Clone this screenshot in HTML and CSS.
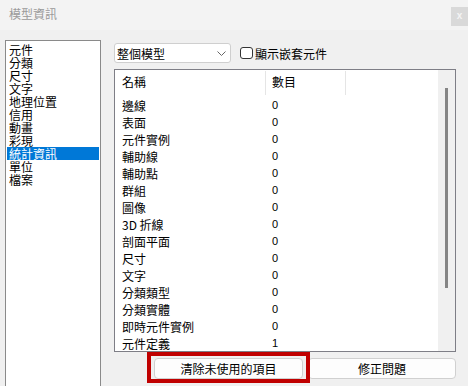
FILE: index.html
```html
<!DOCTYPE html>
<html>
<head>
<meta charset="utf-8">
<link rel="stylesheet" href="styles.css">
</head>
<body>
<div class="window">
  <div class="titlebar">
    <span class="title">模型資訊</span>
    <span class="close">x</span>
  </div>
  <div class="main">
    <ul class="nav">
      <li>元件</li>
      <li>分類</li>
      <li>尺寸</li>
      <li>文字</li>
      <li>地理位置</li>
      <li>信用</li>
      <li>動畫</li>
      <li>彩現</li>
      <li class="sel">統計資訊</li>
      <li>單位</li>
      <li>檔案</li>
    </ul>
    <div class="content">
      <div class="toolbar">
        <div class="select">
          <span>整個模型</span>
          <svg class="chev" width="9" height="5" viewBox="0 0 9 5"><path d="M0.5 0.5 L4.5 4.5 L8.5 0.5" fill="none" stroke="#666" stroke-width="1"/></svg>
        </div>
        <label class="check"><span class="box"></span><span>顯示嵌套元件</span></label>
      </div>
      <div class="table">
        <div class="grid">
          <div class="head">
            <div class="c1">名稱</div>
            <div class="c2">數目</div>
            <div class="c3"></div>
          </div>
          <div class="row"><div class="c1">邊線</div><div class="c2 n">0</div></div>
          <div class="row"><div class="c1">表面</div><div class="c2 n">0</div></div>
          <div class="row"><div class="c1">元件實例</div><div class="c2 n">0</div></div>
          <div class="row"><div class="c1">輔助線</div><div class="c2 n">0</div></div>
          <div class="row"><div class="c1">輔助點</div><div class="c2 n">0</div></div>
          <div class="row"><div class="c1">群組</div><div class="c2 n">0</div></div>
          <div class="row"><div class="c1">圖像</div><div class="c2 n">0</div></div>
          <div class="row"><div class="c1">3D 折線</div><div class="c2 n">0</div></div>
          <div class="row"><div class="c1">剖面平面</div><div class="c2 n">0</div></div>
          <div class="row"><div class="c1">尺寸</div><div class="c2 n">0</div></div>
          <div class="row"><div class="c1">文字</div><div class="c2 n">0</div></div>
          <div class="row"><div class="c1">分類類型</div><div class="c2 n">0</div></div>
          <div class="row"><div class="c1">分類實體</div><div class="c2 n">0</div></div>
          <div class="row"><div class="c1">即時元件實例</div><div class="c2 n">0</div></div>
          <div class="row"><div class="c1">元件定義</div><div class="c2 n">1</div></div>
        </div>
        <div class="scroll"><div class="thumb"></div></div>
      </div>
      <div class="buttons">
        <button class="btn b1">清除未使用的項目</button>
        <button class="btn b2">修正問題</button>
      </div>
    </div>
  </div>
  <div class="highlight"></div>
</div>
</body>
</html>
```
FILE: styles.css
```css
* { box-sizing: border-box; }
html, body { margin: 0; padding: 0; }
body {
  width: 468px;
  height: 386px;
  overflow: hidden;
  background: #f0f0f0;
  font-family: "Noto Sans CJK TC", "Liberation Sans", sans-serif;
  font-size: 12px;
  color: #000;
}
.window { position: relative; width: 468px; height: 386px; }
.titlebar {
  height: 30px;
  background: #f3f3f3;
  display: flex;
  align-items: flex-start;
}
.title {
  margin: 6px 0 0 9px;
  font-size: 12px;
  line-height: 16px;
  color: #9a9a9a;
}
.close {
  margin-left: auto;
  margin-top: 7px;
  width: 17px;
  height: 19px;
  background: #d9d9d9;
  color: #f4f4f4;
  font-family: "Liberation Sans", sans-serif;
  font-weight: bold;
  font-size: 10px;
  line-height: 18px;
  text-align: center;
}
.main {
  display: flex;
  padding: 10px 0 0 5px;
  height: 356px;
}
.nav {
  list-style: none;
  margin: 0;
  padding: 2px 1px 0 1px;
  width: 96px;
  height: 360px;
  background: #fff;
  border: 1px solid #8a8a8a;
  border-bottom: none;
}
.nav li {
  height: 13px;
  line-height: 13px;
  font-size: 12px;
  padding-left: 2px;
  white-space: nowrap;
}
.nav li.sel { background: #0078d7; color: #fff; }
.content {
  margin-left: 13px;
  width: 342px;
  display: flex;
  flex-direction: column;
}
.toolbar {
  margin-top: 3px;
  height: 20px;
  display: flex;
  align-items: center;
}
.select {
  width: 117px;
  height: 20px;
  background: #fff;
  border: 1px solid #cfcfcf;
  border-radius: 3px;
  display: flex;
  align-items: center;
  padding: 0 0 0 2px;
  font-size: 12px;
}
.chev { margin-left: auto; margin-right: 4px; }
.check {
  display: flex;
  align-items: center;
  margin-left: 9px;
  font-size: 12px;
}
.box {
  width: 13px;
  height: 12px;
  border: 1px solid #333;
  border-radius: 3px;
  background: #fff;
  margin-right: 2px;
}
.table {
  margin-top: 6px;
  height: 283px;
  background: #fff;
  border: 1px solid #7e7e86;
  display: flex;
  padding: 1px 0 0 0;
}
.grid { flex: 1; }
.head, .row { display: flex; }
.head { height: 26px; align-items: flex-start; }
.head > div {
  height: 24px;
  line-height: 22px;
  font-size: 12px;
}
.head .c2, .head .c3 { border-left: 1px solid #e5e5e5; }
.c1 { width: 150px; padding-left: 7px; }
.c2 { width: 80px; padding-left: 6px; }
.c3 { flex: 1; }
.row { height: 17px; line-height: 17px; }
.n { font-family: "Liberation Sans", sans-serif; font-size: 11px; padding-left: 7px; }
.scroll {
  width: 17px;
  background: #f0f0f0;
  margin-top: -1px;
}
.thumb {
  margin: 18px 0 0 7px;
  width: 3px;
  height: 200px;
  background: #858585;
}
.buttons {
  margin-top: 6px;
  display: flex;
  gap: 5px;
  padding-left: 40px;
}
.btn {
  height: 21px;
  background: #fdfdfd;
  border: 1px solid #d0d0d0;
  border-radius: 4px;
  font-family: "Noto Sans CJK TC", "Liberation Sans", sans-serif;
  font-size: 12px;
  color: #000;
  padding: 0;
  line-height: 18px;
}
.b1 { width: 149px; }
.b2 { width: 148px; }
.highlight {
  position: absolute;
  left: 147px;
  top: 352px;
  width: 163px;
  height: 31px;
  border: 4px solid #c00000;
}
```
